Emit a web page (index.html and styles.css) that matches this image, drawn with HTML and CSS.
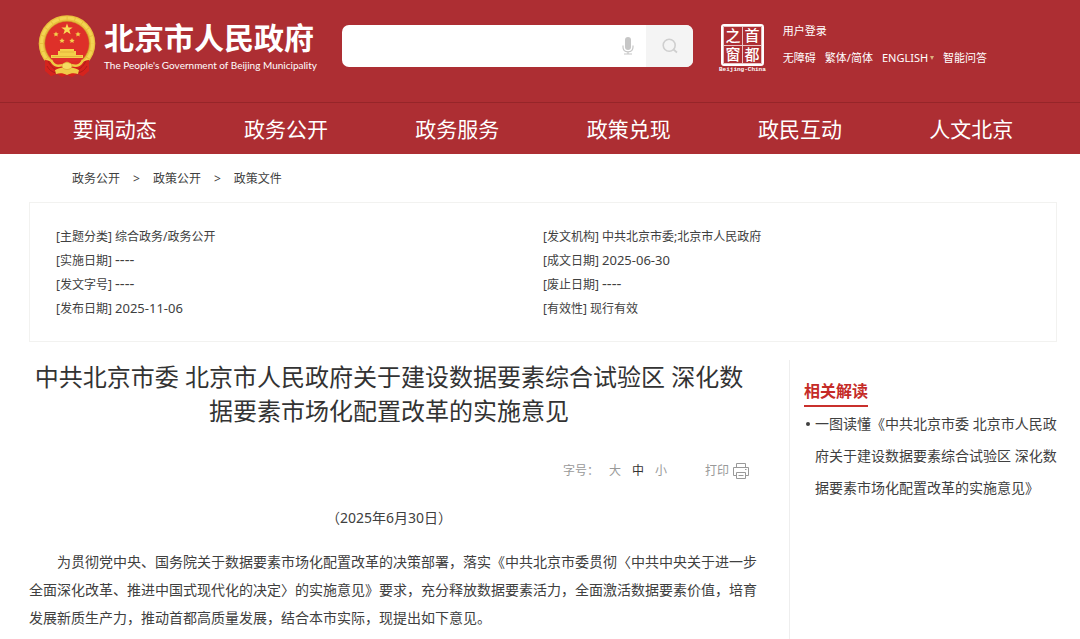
FILE: index.html
```html
<!DOCTYPE html>
<html lang="zh-CN">
<head>
<meta charset="utf-8">
<meta name="viewport" content="width=device-width, initial-scale=1">
<title>北京市人民政府</title>
<link rel="stylesheet" href="styles.css">
</head>
<body>
<header class="site-header">
  <div class="masthead">
    <a class="brand" href="#">
      <svg class="emblem" viewBox="0 0 58 63" aria-hidden="true">
        <path d="M9 42 L7 55 L13 61 L19 59 L24 62 L29 60 L34 62 L39 59 L45 61 L51 55 L49 42Z" fill="#d5231d"/>
        <circle cx="29" cy="28.500" r="28.300" fill="#e9bf3c"/>
        <circle cx="29" cy="28.500" r="25.500" fill="none" stroke="#f3d452" stroke-width="3" stroke-dasharray="7 1"/>
        <circle cx="29" cy="28.500" r="22.300" fill="#de3029" stroke="#c99229" stroke-width=".6"/>
        <path d="M29 8.500l1.500 4h4.200l-3.400 2.600 1.300 4.200-3.600-2.500-3.600 2.500 1.300-4.200-3.400-2.600h4.200z" fill="#f9d955"/>
        <g fill="#f4ce4b">
          <path id="star" d="M18 16.500l.8 1.700 1.900.2-1.400 1.300.4 1.900-1.700-1-1.700 1 .4-1.900-1.400-1.300 1.900-.2z"/>
          <use href="#star" x="22"/>
          <use href="#star" x="6" y="6.500"/>
          <use href="#star" x="16" y="6.500"/>
        </g>
        <path d="M22 34h14v2h2v4H20v-4h2z" fill="#f4cf4a"/>
        <path d="M13 40h32v3H13z" fill="#f4cf4a"/>
        <path d="M22 37h14M14 41.500h30" stroke="#d09b2c" stroke-width=".5"/>
        <path d="M14 45c5 1 10 2 15 2s10-1 15-2l-3 5c-4 2-8 2-12-1-4 3-8 3-12 1z" fill="#dc2d25"/>
        <path d="M7 45c3 0 6 1 8 4 3 4 8 3 14 1 6 2 11 3 14-1 2-3 5-4 8-4l0 11-6 5-7-3-9 2-9-2-7 3-6-5z" fill="#d5231d"/>
        <path d="M10 46c3 6 7 9 12 10M48 46c-3 6-7 9-12 10M9 51c2 4 5 6 9 7M49 51c-2 4-5 6-9 7" fill="none" stroke="#a91b1b" stroke-width=".9"/>
        <path d="M13 45c3 7 9 7 16 3 7 4 13 4 16-3" fill="none" stroke="#efca44" stroke-width="2.500"/>
        <path d="M17 55c4-2 8-3 12-2 4-1 8 0 12 2l-1 4c-4-1-7-1-11 1-4-2-7-2-11-1z" fill="#f0cb48"/>
        <ellipse cx="29" cy="51" rx="5" ry="3.500" fill="#f6dc62" stroke="#d5a02f" stroke-width=".6"/>
      </svg>
      <span class="brand-text">
        <span class="brand-name">北京市人民政府</span>
        <span class="brand-en">The People's Government of Beijing Municipality</span>
      </span>
    </a>
    <form class="search" role="search">
      <input class="search-input" type="search" aria-label="搜索">
      <button class="voice" type="button" aria-label="语音搜索">
        <svg width="12" height="18" viewBox="0 0 12 18" aria-hidden="true">
          <rect x="3" y="0" width="6" height="13" rx="3" fill="#c6c6c6"/>
          <path d="M1 8.500v1.500c0 3 2 4.800 5 4.800s5-1.800 5-4.800V8.500M6 15v2M2 17h8" fill="none" stroke="#c6c6c6" stroke-width="1.200"/>
        </svg>
      </button>
      <button class="search-go" type="submit" aria-label="搜索">
        <svg width="16" height="16" viewBox="0 0 16 16" aria-hidden="true">
          <circle cx="7.200" cy="7.200" r="6" fill="none" stroke="#cfcfcf" stroke-width="1.600"/>
          <path d="M11.500 11.500l3.500 3" stroke="#cfcfcf" stroke-width="1.800"/>
        </svg>
      </button>
    </form>
    <a class="capital" href="#">
      <span class="seal"><span>之</span><span>首</span><span>窗</span><span>都</span></span>
      <span class="seal-en">Beijing-China</span>
    </a>
    <div class="tools">
      <div class="tools-row"><a href="#">用户登录</a></div>
      <div class="tools-row">
        <a href="#">无障碍</a>
        <a href="#">繁体/简体</a>
        <a class="english" href="#">ENGLISH</a>
        <a href="#">智能问答</a>
      </div>
    </div>
  </div>
  <nav class="main-nav">
    <a href="#">要闻动态</a>
    <a href="#">政务公开</a>
    <a href="#">政务服务</a>
    <a href="#">政策兑现</a>
    <a href="#">政民互动</a>
    <a href="#">人文北京</a>
  </nav>
</header>

<main class="page">
  <nav class="crumbs" aria-label="当前位置">
    <a href="#">政务公开</a><span>&gt;</span><a href="#">政策公开</a><span>&gt;</span><a href="#">政策文件</a>
  </nav>

  <ul class="meta">
    <li>[主题分类] 综合政务/政务公开</li>
    <li>[发文机构] 中共北京市委;北京市人民政府</li>
    <li>[实施日期] <span class="empty">----</span></li>
    <li>[成文日期] <span class="figure">2025-06-30</span></li>
    <li>[发文字号] <span class="empty">----</span></li>
    <li>[废止日期] <span class="empty">----</span></li>
    <li>[发布日期] <span class="figure">2025-11-06</span></li>
    <li>[有效性] 现行有效</li>
  </ul>

  <div class="columns">
    <article class="article">
      <div class="article-head">
        <h1>中共北京市委 北京市人民政府关于建设数据要素综合试验区 深化数据要素市场化配置改革的实施意见</h1>
        <div class="controls">
          <span class="size-label">字号&#65306;</span>
          <span class="sizes">
            <button type="button">大</button>
            <button class="active" type="button">中</button>
            <button type="button">小</button>
          </span>
          <button class="print" type="button">打印
            <svg width="16" height="16" viewBox="0 0 16 16" fill="none" stroke="#999" aria-hidden="true">
              <path d="M3.500 4.500v-4h9v4M3.500 12.500h-3v-8h15v8h-3M3.500 9.500h9v6h-9zM5.500 12.500h5M12 6.500h1.500"/>
            </svg>
          </button>
        </div>
        <p class="date">&#65288;2025年6月30日&#65289;</p>
      </div>
      <p class="body-text">为贯彻党中央、国务院关于数据要素市场化配置改革的决策部署&#65292;落实《中共北京市委贯彻〈中共中央关于进一步全面深化改革、推进中国式现代化的决定〉的实施意见》要求&#65292;充分释放数据要素活力&#65292;全面激活数据要素价值&#65292;培育发展新质生产力&#65292;推动首都高质量发展&#65292;结合本市实际&#65292;现提出如下意见。</p>
    </article>
    <aside class="related">
      <h2>相关解读</h2>
      <ul>
        <li><a href="#">一图读懂《中共北京市委 北京市人民政府关于建设数据要素综合试验区 深化数据要素市场化配置改革的实施意见》</a></li>
      </ul>
    </aside>
  </div>
</main>
</body>
</html>
```
FILE: styles.css
```css
* {
  box-sizing: border-box;
}

body {
  margin: 0;
  background: #fff;
  color: #404040;
  font-family: "Noto Sans", "Noto Sans CJK SC", sans-serif;
  font-size: 12px;
}

a {
  color: inherit;
  text-decoration: none;
}

button {
  padding: 0;
  border: 0;
  background: none;
  color: inherit;
  font: inherit;
  cursor: pointer;
}

ul {
  margin: 0;
  padding: 0;
  list-style: none;
}

/* Header */
.site-header {
  background: #ad2e33;
  color: #fff;
}

.masthead {
  display: flex;
  align-items: flex-start;
  padding: 15px 29px 24px 38px;
  border-bottom: 1px solid #962529;
}

.brand {
  display: flex;
  gap: 8px;
  width: 304px;
  white-space: nowrap;
}

.emblem {
  width: 58px;
  height: 63px;
}

.brand-text {
  display: flex;
  flex-direction: column;
  padding-top: 7px;
}

.brand-name {
  font-size: 30px;
  font-weight: 700;
  line-height: 32px;
}

.brand-en {
  font-family: Lato, sans-serif;
  font-size: 10px;
  line-height: 22px;
}

.search {
  display: flex;
  flex: 0 1 351px;
  height: 42px;
  margin-top: 10px;
  overflow: hidden;
  border-radius: 7px;
  background: #fff;
}

.search-input {
  flex: 1;
  min-width: 0;
  padding: 0 12px;
  border: 0;
  outline: 0;
  background: transparent;
}

.voice {
  display: grid;
  place-items: center;
  width: 36px;
}

.search-go {
  display: grid;
  place-items: center;
  width: 47px;
  background: #f4f4f4;
}

.capital {
  display: flex;
  flex-direction: column;
  align-items: center;
  margin: 9px 17px 0 26px;
}

.seal {
  display: grid;
  grid-template-columns: 1fr 1fr;
  gap: 1px;
  width: 43px;
  height: 42px;
  padding: 1px;
  border: 2px solid #fff;
  border-radius: 3px;
  background: linear-gradient(#e9c4c5, #e9c4c5) center / 1px 100% no-repeat,
    linear-gradient(#e9c4c5, #e9c4c5) center / 100% 1px no-repeat;
  box-shadow: inset 0 0 0 1px #e9c4c5;
}

.seal span {
  font-size: 15px;
  font-weight: 500;
  line-height: 17px;
  text-align: center;
}

.seal-en {
  font-family: "Liberation Mono", monospace;
  font-size: 6px;
  font-weight: 700;
  line-height: 8px;
}

.tools {
  display: grid;
  gap: 11px;
  padding-top: 8px;
  font-size: 11px;
  line-height: 16px;
  white-space: nowrap;
}

.tools-row {
  display: flex;
  gap: 9px;
}

.english::after {
  content: "";
  display: inline-block;
  margin-left: 2px;
  border: 2px solid transparent;
  border-top: 4px solid #dcb27c;
  border-bottom: 0;
  vertical-align: 2px;
}

.main-nav {
  display: grid;
  grid-template-columns: repeat(6, 1fr);
  padding: 1px 23px 0 29px;
  font-size: 21px;
  line-height: 50px;
  text-align: center;
}

/* Page */
.page {
  padding: 0 23px 0 29px;
}

.crumbs {
  display: flex;
  gap: 13px;
  padding: 13px 43px 11px;
  line-height: 24px;
}

.meta {
  display: grid;
  grid-template-columns: 1fr 1fr;
  grid-auto-rows: 24px;
  padding: 22px 26px 20px;
  border: 1px solid #f2f2f0;
  line-height: 24px;
}

.figure {
  font-size: 13px;
  line-height: 1;
}

.empty {
  font-size: 15px;
  line-height: 1;
}

.columns {
  display: grid;
  grid-template-columns: 1fr 268px;
  margin-top: 18px;
}

.article {
  padding-right: 30px;
}

.article-head {
  padding-right: 10px;
}

h1 {
  margin: 0;
  color: #333;
  font-size: 24px;
  font-weight: 400;
  line-height: 34px;
  text-align: center;
}

.controls {
  display: flex;
  align-items: center;
  justify-content: flex-end;
  margin-top: 31px;
  color: #999;
  line-height: 24px;
}

.sizes {
  display: flex;
  gap: 11px;
  margin: 0 38px 0 10px;
}

.active {
  color: #333;
}

.print {
  display: flex;
  align-items: center;
  gap: 4px;
}

.date {
  margin: 21px 0 0;
  font-size: 14px;
  line-height: 28px;
  text-align: center;
}

.body-text {
  margin: 16px 0 0;
  font-size: 14px;
  line-height: 28px;
  text-indent: 2em;
}

.related {
  min-height: 280px;
  padding: 17px 0 0 14px;
  border-left: 1px solid #eee;
}

h2 {
  width: fit-content;
  margin: 0 0 1px;
  border-bottom: 2px solid #c9302c;
  color: #c52b27;
  font-size: 16px;
  font-weight: 700;
  line-height: 28px;
}

.related ul {
  padding-left: 11px;
  font-size: 14px;
  line-height: 32px;
}

.related li::before {
  content: "";
  float: left;
  width: 4px;
  height: 4px;
  margin: 14px 0 0 -9px;
  border-radius: 50%;
  background: #404040;
}
```
